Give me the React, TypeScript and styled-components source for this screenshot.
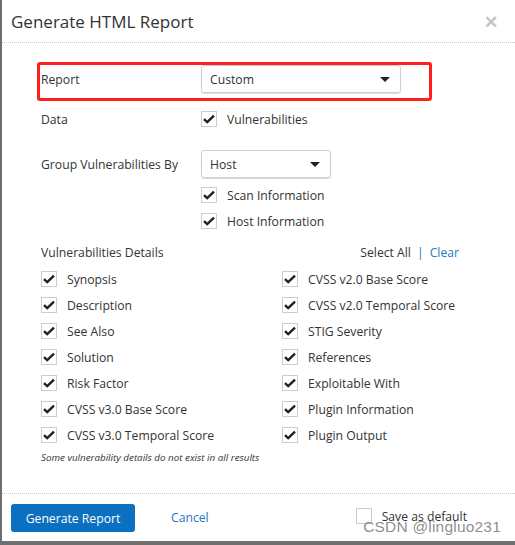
import React from "react";
import styled, { createGlobalStyle } from "styled-components";

const GlobalStyle = createGlobalStyle`
  html, body {
    margin: 0;
    padding: 0;
    background: #6f6f6f;
  }
  body {
    font-family: "Open Sans", "Noto Sans", Arial, sans-serif;
    color: #333;
  }
`;

const Modal = styled.div`
  position: relative;
  width: 513px;
  height: 541px;
  margin-left: 2px;
  background: #fff;
  display: flex;
  flex-direction: column;
`;

const Header = styled.div`
  height: 43px;
  flex-shrink: 0;
  box-sizing: border-box;
  padding: 0 17px 0 9px;
  display: flex;
  align-items: center;
  justify-content: space-between;
  border-bottom: 1px dotted #c8c8c8;
`;

const Title = styled.h1`
  margin: 0;
  font-size: 17px;
  font-weight: 400;
  color: #333;
`;

const CloseButton = styled.span`
  font-size: 17px;
  font-weight: 700;
  color: #c4c4c4;
  line-height: 1;
`;

const Body = styled.div`
  flex: 1;
  padding: 22px 0 0 39px;
  font-size: 12.2px;
`;

const FormRow = styled.div<{ $height: number; $gap?: number }>`
  position: relative;
  display: grid;
  grid-template-columns: 160px auto;
  align-items: center;
  height: ${({ $height }) => $height}px;
  margin-bottom: ${({ $gap }) => $gap ?? 0}px;
`;

const Highlight = styled.div`
  position: absolute;
  left: -4px;
  top: -3px;
  width: 395px;
  height: 39px;
  border: 3px solid #ff1f1f;
  border-radius: 3px;
  box-sizing: border-box;
  pointer-events: none;
`;

const Label = styled.span`
  color: #333;
`;

const Select = styled.div<{ $width: number }>`
  width: ${({ $width }) => $width}px;
  height: 28px;
  box-sizing: border-box;
  border: 1px solid #cfcfcf;
  border-radius: 3px;
  box-shadow: 0 1px 1px rgba(0, 0, 0, 0.14);
  padding: 0 10px 0 8px;
  display: flex;
  align-items: center;
  justify-content: space-between;
  color: #333;
`;

const Caret = styled.span`
  width: 0;
  height: 0;
  border-left: 5px solid transparent;
  border-right: 5px solid transparent;
  border-top: 5px solid #222;
`;

const Indent = styled.div`
  padding-left: 160px;
  margin-top: 1px;
`;

const CheckRow = styled.label`
  display: flex;
  align-items: center;
  height: 26px;
  gap: 10px;
  color: #333;
  white-space: nowrap;
`;

const Box = styled.span`
  width: 16px;
  height: 16px;
  box-sizing: border-box;
  border: 1px solid #cdcdcd;
  display: inline-flex;
  align-items: center;
  justify-content: center;
  flex-shrink: 0;
`;

const DetailsHeader = styled.div`
  display: flex;
  justify-content: space-between;
  align-items: center;
  width: 418px;
  height: 26px;
  margin-top: 5px;
`;

const Links = styled.span`
  color: #333;
`;

const LinkText = styled.span`
  color: #2278c4;
`;

const Separator = styled.span`
  color: #2278c4;
  margin: 0 6px;
`;

const DetailsGrid = styled.div`
  display: grid;
  grid-template-columns: 241px 200px;
  grid-auto-flow: column;
  grid-template-rows: repeat(7, 26px);
  margin-top: 1px;
`;

const Note = styled.div`
  font-size: 9.8px;
  font-style: italic;
  color: #333;
  margin-top: 3px;
`;

const Footer = styled.div`
  height: 48px;
  flex-shrink: 0;
  box-sizing: border-box;
  border-top: 1px dotted #c8c8c8;
  padding: 10px 0 0 9px;
  display: flex;
  align-items: flex-start;
  font-size: 12.2px;
`;

const PrimaryButton = styled.button`
  width: 124px;
  height: 28px;
  border: none;
  border-radius: 3px;
  background: #0b70bf;
  color: #fff;
  font-family: inherit;
  font-size: 12.2px;
  padding: 0;
`;

const CancelLink = styled.span`
  color: #1f76c6;
  margin-left: 36px;
  line-height: 28px;
`;

const SaveDefault = styled.label`
  display: flex;
  align-items: center;
  gap: 10px;
  margin-left: auto;
  margin-right: 48px;
  height: 28px;
  margin-top: -2px;
  color: #333;
`;

const Watermark = styled.span`
  position: absolute;
  right: 14px;
  bottom: 5px;
  font-family: "Liberation Sans", Arial, sans-serif;
  font-size: 15.5px;
  color: rgba(120, 120, 120, 0.85);
  pointer-events: none;
  letter-spacing: 0.2px;
`;

const Check = () => (
  <svg width="12" height="10" viewBox="0 0 12 10">
    <path d="M1 5.2 L4.2 8.2 L11 1.6" fill="none" stroke="#222" strokeWidth="2.4" />
  </svg>
);

type CheckboxProps = { label: string; checked?: boolean };

const Checkbox = ({ label, checked = true }: CheckboxProps) => (
  <CheckRow>
    <Box>{checked && <Check />}</Box>
    <span>{label}</span>
  </CheckRow>
);

const leftDetails = [
  "Synopsis",
  "Description",
  "See Also",
  "Solution",
  "Risk Factor",
  "CVSS v3.0 Base Score",
  "CVSS v3.0 Temporal Score",
];

const rightDetails = [
  "CVSS v2.0 Base Score",
  "CVSS v2.0 Temporal Score",
  "STIG Severity",
  "References",
  "Exploitable With",
  "Plugin Information",
  "Plugin Output",
];

const App = () => {
  return (
    <>
      <GlobalStyle />
      <Modal>
        <Header>
          <Title>Generate HTML Report</Title>
          <CloseButton>✕</CloseButton>
        </Header>
        <Body>
          <FormRow $height={28} $gap={13}>
            <Highlight />
            <Label>Report</Label>
            <Select $width={200}>
              <span>Custom</span>
              <Caret />
            </Select>
          </FormRow>
          <FormRow $height={26} $gap={18}>
            <Label>Data</Label>
            <Checkbox label="Vulnerabilities" />
          </FormRow>
          <FormRow $height={28} $gap={4}>
            <Label>Group Vulnerabilities By</Label>
            <Select $width={130}>
              <span>Host</span>
              <Caret />
            </Select>
          </FormRow>
          <Indent>
            <Checkbox label="Scan Information" />
            <Checkbox label="Host Information" />
          </Indent>
          <DetailsHeader>
            <Label>Vulnerabilities Details</Label>
            <Links>
              Select All
              <Separator>|</Separator>
              <LinkText>Clear</LinkText>
            </Links>
          </DetailsHeader>
          <DetailsGrid>
            {leftDetails.concat(rightDetails).map((item) => (
              <Checkbox key={item} label={item} />
            ))}
          </DetailsGrid>
          <Note>Some vulnerability details do not exist in all results</Note>
        </Body>
        <Footer>
          <PrimaryButton>Generate Report</PrimaryButton>
          <CancelLink>Cancel</CancelLink>
          <SaveDefault>
            <Box />
            <span>Save as default</span>
          </SaveDefault>
        </Footer>
        <Watermark>CSDN @lingluo231</Watermark>
      </Modal>
    </>
  );
};

export default App;
